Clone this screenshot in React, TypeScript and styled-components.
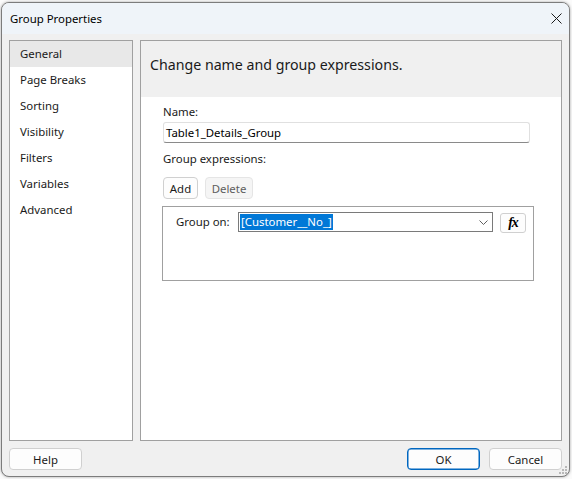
import React from "react";
import styled, { createGlobalStyle } from "styled-components";

const GlobalStyle = createGlobalStyle`
  html, body { margin: 0; padding: 0; background: #f7f7f7; }
  body { font-family: "Noto Sans", "Open Sans", sans-serif; font-size: 11.4px; color: #1a1a1a; }
  * { box-sizing: border-box; }
`;

const Backdrop = styled.div`
  width: 572px;
  height: 479px;
  padding: 2px 2px 2px 1px;
  background: #fbfbfb;
`;

const Dialog = styled.div`
  position: relative;
  width: 569px;
  height: 475px;
  border: 1px solid #7c7c7c;
  border-radius: 8px;
  overflow: hidden;
  background: #f0f0f0;
  display: flex;
  flex-direction: column;
  box-shadow: 0 0 3px rgba(0, 0, 0, 0.35);
`;

const TitleBar = styled.div`
  height: 31px;
  flex: none;
  background: #eff4f9;
  display: flex;
  align-items: center;
  justify-content: space-between;
  padding: 0 6px 0 8px;
  color: #000;
`;

const CloseBtn = styled.div`
  width: 14px;
  height: 14px;
  display: flex;
  align-items: center;
  justify-content: center;
`;

const Body = styled.div`
  flex: 1;
  display: flex;
  flex-direction: column;
  padding: 6px 7px 5px 7px;
`;

const Panels = styled.div`
  display: flex;
  gap: 7px;
  height: 401px;
`;

const Nav = styled.div`
  width: 124px;
  background: #fff;
  border: 1px solid #a0a0a0;
  display: flex;
  flex-direction: column;
`;

const NavItem = styled.div<{ $active?: boolean }>`
  height: 26px;
  line-height: 26px;
  padding-left: 10px;
  background: ${(p) => (p.$active ? "#e8e8e8" : "transparent")};
  color: #1a1a1a;
`;

const Main = styled.div`
  flex: 1;
  background: #fff;
  border: 1px solid #a0a0a0;
  display: flex;
  flex-direction: column;
`;

const Header = styled.div`
  height: 56px;
  background: #f0f0f0;
  padding: 14px 0 0 9px;
  line-height: 20px;
  font-size: 14.2px;
  color: #1a1a1a;
`;

const Content = styled.div`
  padding: 6px 0 0 22px;
  display: flex;
  flex-direction: column;
`;

const Label = styled.div`
  height: 16px;
  line-height: 17px;
`;

const TextInput = styled.div`
  margin-top: 3px;
  width: 367px;
  height: 21px;
  border: 1px solid #e0e0e0;
  border-bottom-color: #8a8a8a;
  border-radius: 3px;
  display: flex;
  align-items: center;
  padding-left: 2px;
  color: #000;
`;

const Spacer = styled.div<{ $h: number }>`
  height: ${(p) => p.$h}px;
`;

const ButtonRow = styled.div`
  display: flex;
  gap: 7px;
  margin-top: 4px;
`;

const Button = styled.div<{ $w: number; $disabled?: boolean; $primary?: boolean }>`
  width: ${(p) => p.$w}px;
  height: 22px;
  border-radius: 4px;
  display: flex;
  align-items: center;
  justify-content: center;
  background: ${(p) => (p.$disabled ? "#f5f5f5" : "#fdfdfd")};
  border: 1px solid ${(p) => (p.$primary ? "#0067c0" : p.$disabled ? "#e5e5e5" : "#d0d0d0")};
  box-shadow: ${(p) => (p.$primary ? "inset 0 0 0 0.5px #0067c0" : "none")};
  color: ${(p) => (p.$disabled ? "#5d5d5d" : "#1a1a1a")};
`;

const GroupBox = styled.div`
  margin-top: 7px;
  margin-left: -1px;
  width: 372px;
  height: 75px;
  border: 1px solid #a0a0a0;
  padding: 5px 0 0 13px;
`;

const GroupRow = styled.div`
  display: flex;
  align-items: flex-start;
`;

const GroupLabel = styled.div`
  width: 62px;
  height: 20px;
  line-height: 20px;
`;

const Combo = styled.div`
  width: 255px;
  height: 20px;
  border: 1px solid #7a7a7a;
  display: flex;
  align-items: center;
  padding-left: 1px;
  justify-content: space-between;
  background: #fff;
`;

const Selected = styled.span`
  background: #0078d7;
  color: #fff;
  height: 16px;
  line-height: 16px;
  padding: 0 1px;
`;

const Chevron = styled.div`
  width: 18px;
  display: flex;
  align-items: center;
  justify-content: center;
`;

const FxButton = styled.div`
  margin-left: 7px;
  margin-top: 1px;
  width: 26px;
  height: 20px;
  border: 1px solid #d0d0d0;
  border-radius: 3px;
  background: #fdfdfd;
  display: flex;
  align-items: center;
  justify-content: center;
  font-family: "Liberation Serif", serif;
  font-style: italic;
  font-weight: bold;
  font-size: 14px;
  color: #000;
  letter-spacing: -1px;
`;

const Footer = styled.div`
  margin-top: 7px;
  display: flex;
  justify-content: space-between;
`;

const FooterRight = styled.div`
  display: flex;
  gap: 9px;
`;

const Grip = styled.svg`
  position: absolute;
  right: 2px;
  bottom: 2px;
`;

const navItems = ["General", "Page Breaks", "Sorting", "Visibility", "Filters", "Variables", "Advanced"];

export default function App() {
  return (
    <>
      <GlobalStyle />
      <Backdrop>
        <Dialog>
          <TitleBar>
            <span>Group Properties</span>
            <CloseBtn>
              <svg width="11" height="11" viewBox="0 0 11 11">
                <path d="M0.5 0.5 L10.5 10.5 M10.5 0.5 L0.5 10.5" stroke="#1a1a1a" strokeWidth="1" />
              </svg>
            </CloseBtn>
          </TitleBar>
          <Body>
            <Panels>
              <Nav>
                {navItems.map((n, i) => (
                  <NavItem key={n} $active={i === 0}>
                    {n}
                  </NavItem>
                ))}
              </Nav>
              <Main>
                <Header>Change name and group expressions.</Header>
                <Content>
                  <Label>Name:</Label>
                  <TextInput>Table1_Details_Group</TextInput>
                  <Spacer $h={7} />
                  <Label>Group expressions:</Label>
                  <Spacer $h={7} />
                  <ButtonRow>
                    <Button $w={35}>Add</Button>
                    <Button $w={48} $disabled>
                      Delete
                    </Button>
                  </ButtonRow>
                  <GroupBox>
                    <GroupRow>
                      <GroupLabel>Group on:</GroupLabel>
                      <Combo>
                        <Selected>[Customer__No_]</Selected>
                        <Chevron>
                          <svg width="9" height="5" viewBox="0 0 9 5">
                            <path d="M0.5 0.5 L4.5 4.5 L8.5 0.5" stroke="#606060" fill="none" strokeWidth="1" />
                          </svg>
                        </Chevron>
                      </Combo>
                      <FxButton>fx</FxButton>
                    </GroupRow>
                  </GroupBox>
                </Content>
              </Main>
            </Panels>
            <Footer>
              <Button $w={73}>Help</Button>
              <FooterRight>
                <Button $w={73} $primary>
                  OK
                </Button>
                <Button $w={73}>Cancel</Button>
              </FooterRight>
            </Footer>
          </Body>
          <Grip width="8" height="8" viewBox="0 0 8 8">
            <rect x="6" y="0" width="2" height="2" fill="#b8b8b8" />
            <rect x="3" y="3" width="2" height="2" fill="#b8b8b8" />
            <rect x="6" y="3" width="2" height="2" fill="#b8b8b8" />
            <rect x="0" y="6" width="2" height="2" fill="#b8b8b8" />
            <rect x="3" y="6" width="2" height="2" fill="#b8b8b8" />
            <rect x="6" y="6" width="2" height="2" fill="#b8b8b8" />
          </Grip>
        </Dialog>
      </Backdrop>
    </>
  );
}
